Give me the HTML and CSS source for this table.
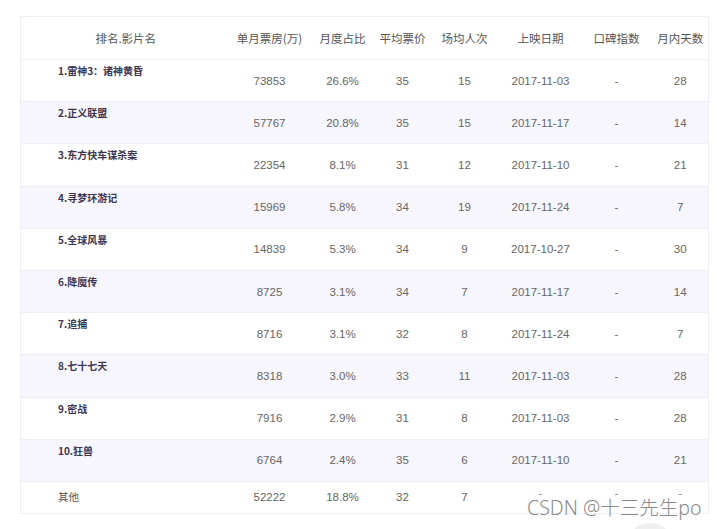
FILE: index.html
```html
<!DOCTYPE html>
<html lang="zh-CN">
<head>
<meta charset="utf-8">
<title>月度票房</title>
<link rel="stylesheet" href="styles.css">
</head>
<body>
<div class="page">
  <table class="box">
    <colgroup>
      <col class="c-name"><col class="c-box"><col class="c-ratio"><col class="c-price"><col class="c-people"><col class="c-date"><col class="c-rate"><col class="c-days">
    </colgroup>
    <thead>
      <tr class="head">
        <th>排名.影片名</th><th>单月票房(万)</th><th>月度占比</th><th>平均票价</th><th>场均人次</th><th>上映日期</th><th>口碑指数</th><th>月内天数</th>
      </tr>
    </thead>
    <tbody>
      <tr><td class="name">1.雷神3：诸神黄昏</td><td>73853</td><td>26.6%</td><td>35</td><td>15</td><td>2017-11-03</td><td>-</td><td>28</td></tr>
      <tr class="alt"><td class="name">2.正义联盟</td><td>57767</td><td>20.8%</td><td>35</td><td>15</td><td>2017-11-17</td><td>-</td><td>14</td></tr>
      <tr><td class="name">3.东方快车谋杀案</td><td>22354</td><td>8.1%</td><td>31</td><td>12</td><td>2017-11-10</td><td>-</td><td>21</td></tr>
      <tr class="alt"><td class="name">4.寻梦环游记</td><td>15969</td><td>5.8%</td><td>34</td><td>19</td><td>2017-11-24</td><td>-</td><td>7</td></tr>
      <tr><td class="name">5.全球风暴</td><td>14839</td><td>5.3%</td><td>34</td><td>9</td><td>2017-10-27</td><td>-</td><td>30</td></tr>
      <tr class="alt"><td class="name">6.降魔传</td><td>8725</td><td>3.1%</td><td>34</td><td>7</td><td>2017-11-17</td><td>-</td><td>14</td></tr>
      <tr><td class="name">7.追捕</td><td>8716</td><td>3.1%</td><td>32</td><td>8</td><td>2017-11-24</td><td>-</td><td>7</td></tr>
      <tr class="alt"><td class="name">8.七十七天</td><td>8318</td><td>3.0%</td><td>33</td><td>11</td><td>2017-11-03</td><td>-</td><td>28</td></tr>
      <tr><td class="name">9.密战</td><td>7916</td><td>2.9%</td><td>31</td><td>8</td><td>2017-11-03</td><td>-</td><td>28</td></tr>
      <tr class="alt"><td class="name">10.狂兽</td><td>6764</td><td>2.4%</td><td>35</td><td>6</td><td>2017-11-10</td><td>-</td><td>21</td></tr>
      <tr class="other"><td class="name">其他</td><td>52222</td><td>18.8%</td><td>32</td><td>7</td><td class="dash">-</td><td class="dash">-</td><td class="dash">-</td></tr>
    </tbody>
  </table>
  <div class="blob"></div>
  <div class="mark">CSDN @十三先生po</div>
</div>
</body>
</html>
```
FILE: styles.css
```css
* { box-sizing: border-box; }
html, body { margin: 0; padding: 0; background: #fff; }
body {
  font-family: "Liberation Sans", "Noto Sans CJK SC", sans-serif;
  width: 718px;
  height: 529px;
  overflow: hidden;
}
.page {
  position: relative;
  width: 718px;
  height: 529px;
  overflow: hidden;
  padding: 16px 10px 0 20px;
}
.box {
  width: 688px;
  table-layout: fixed;
  border-collapse: collapse;
  border: 1px solid #efeef6;
}
.c-name { width: 210px; }
.c-box { width: 78px; }
.c-ratio { width: 68px; }
.c-price { width: 52px; }
.c-people { width: 72px; }
.c-date { width: 80px; }
.c-rate { width: 72px; }
.c-days { width: 56px; }

.head th {
  height: 43px;
  font-weight: normal;
  font-size: 11.5px;
  color: #555;
  text-align: center;
  vertical-align: middle;
  padding: 0;
  border-bottom: 1px solid #efeef6;
  font-family: "Noto Sans CJK SC", "Liberation Sans", sans-serif;
}
tbody tr { height: 42.2px; }
tbody tr.alt { background: #f8f6fd; }
tbody td {
  padding: 0;
  text-align: center;
  vertical-align: middle;
  font-size: 11.5px;
  color: #666;
  border-bottom: 1px solid #efeef6;
}
tbody td.name {
  text-align: left;
  vertical-align: top;
  padding: 4px 0 0 37px;
  font-family: "Noto Sans CJK SC", "Liberation Sans", sans-serif;
  font-size: 10px;
  line-height: 14px;
  font-weight: 600;
  color: #3d3550;
}
tbody tr.other { height: 32px; }
tbody tr.other td { border-bottom: none; }
tbody tr.other td.name {
  vertical-align: middle;
  padding-top: 0;
  font-weight: normal;
  color: #555;
  font-size: 10.5px;
}
tbody tr.other td.dash {
  line-height: 12px;
  padding-bottom: 8px;
  color: #888;
}
.blob {
  position: absolute;
  left: 626px;
  top: 523px;
  width: 48px;
  height: 48px;
  border-radius: 50%;
  background: #efefef;
}
.mark {
  position: absolute;
  left: 527px;
  top: 499px;
  font-family: "Noto Sans", "Noto Sans CJK SC", sans-serif;
  font-size: 19.5px;
  line-height: 18px;
  font-weight: 300;
  color: #8a8a8a;
  white-space: nowrap;
  text-shadow: 0 0 2px #fff, 0 0 2px #fff;
}
```
